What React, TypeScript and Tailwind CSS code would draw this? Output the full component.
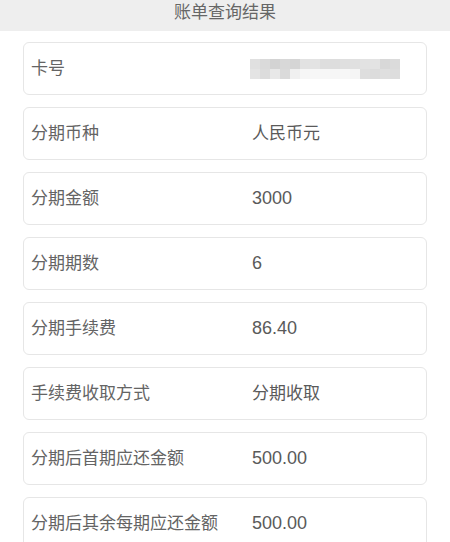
const rows = [
  { label: '分期币种', value: '人民币元' },
  { label: '分期金额', value: '3000' },
  { label: '分期期数', value: '6' },
  { label: '分期手续费', value: '86.40' },
  { label: '手续费收取方式', value: '分期收取' },
  { label: '分期后首期应还金额', value: '500.00' },
  { label: '分期后其余每期应还金额', value: '500.00' },
]

// pixelated (masked) card number, two rows of 10px tiles
const mosaicTop = [
  'bg-[#e0e0e0]', 'bg-[#dadada]', 'bg-[#d3d3d3]', 'bg-[#d8d8d8]', 'bg-[#d5d5d5]',
  'bg-[#e2e2e2]', 'bg-[#e3e3e3]', 'bg-[#dedede]', 'bg-[#dddddd]', 'bg-[#dfdfdf]',
  'bg-[#e0e0e0]', 'bg-[#e2e2e2]', 'bg-[#e3e3e3]', 'bg-[#d8d8d8]', 'bg-[#dbdbdb]',
]
const mosaicBottom = [
  'bg-[#e4e4e4]', 'bg-[#dcdcdc]', 'bg-[#e8e8e8]', 'bg-[#dadada]', 'bg-[#f0f0f0]',
  'bg-[#f6f6f6]', 'bg-[#f7f7f7]', 'bg-[#f7f7f7]', 'bg-[#f6f6f6]', 'bg-[#f7f7f7]',
  'bg-[#f5f5f5]', 'bg-[#dedede]', 'bg-[#dcdcdc]', 'bg-[#dfdfdf]', 'bg-[#dddddd]',
]

function MaskedNumber() {
  return (
    <div className="flex flex-col blur-[0.6px]">
      <div className="flex">
        {mosaicTop.map((c, i) => (
          <div key={i} className={`h-[10px] w-[10px] ${c}`} />
        ))}
      </div>
      <div className="flex">
        {mosaicBottom.map((c, i) => (
          <div key={i} className={`h-[10px] w-[10px] ${c}`} />
        ))}
      </div>
    </div>
  )
}

function Row({ label, children }: { label: string; children: React.ReactNode }) {
  return (
    <div className="flex h-[53px] items-center rounded-[6px] border border-[#e6e6e6] bg-white">
      <div className="w-[228px] shrink-0 pl-[7px] text-[17px] text-[#646464]">{label}</div>
      <div className="text-[#5a5a5a]">{children}</div>
    </div>
  )
}

export default function App() {
  return (
    <div
      className="min-h-[542px] w-[450px] bg-white"
      style={{ fontFamily: '"Liberation Sans", "Noto Sans CJK SC", sans-serif' }}
    >
      {/* Title bar */}
      <div className="flex h-[31px] items-center justify-center bg-[#eeeeee] pb-[6px]">
        <span className="text-[17px] leading-none text-[#666666]">账单查询结果</span>
      </div>

      {/* Result rows */}
      <div className="flex flex-col gap-[12px] px-[23px] pt-[11px]">
        <Row label="卡号">
          <div className="-ml-[2px]">
            <MaskedNumber />
          </div>
        </Row>
        {rows.map((r) => (
          <Row key={r.label} label={r.label}>
            <span className={/^[\d.]+$/.test(r.value) ? 'text-[18px]' : 'text-[17px]'}>{r.value}</span>
          </Row>
        ))}
      </div>
    </div>
  )
}
